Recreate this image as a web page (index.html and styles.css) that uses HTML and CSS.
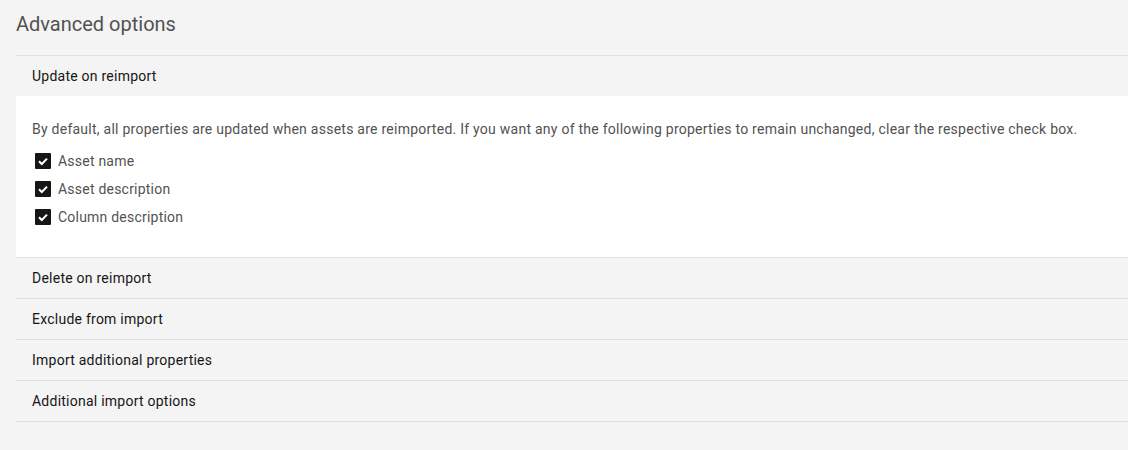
FILE: index.html
```html
<!DOCTYPE html>
<html lang="en">
<head>
<meta charset="utf-8">
<title>Advanced options</title>
<link rel="stylesheet" href="styles.css">
</head>
<body>
<main class="page">
  <h2 class="title">Advanced options</h2>
  <ul class="accordion">
    <li class="item open">
      <div class="heading">Update on reimport</div>
      <div class="content">
        <p class="desc">By default, all properties are updated when assets are reimported. If you want any of the following properties to remain unchanged, clear the respective check box.</p>
        <div class="checks">
          <label class="check"><span class="box"><svg viewBox="0 0 16 16" width="16" height="16"><path d="M4 8.2 L6.8 11 L12 5.6" fill="none" stroke="#fff" stroke-width="2"/></svg></span><span class="label">Asset name</span></label>
          <label class="check"><span class="box"><svg viewBox="0 0 16 16" width="16" height="16"><path d="M4 8.2 L6.8 11 L12 5.6" fill="none" stroke="#fff" stroke-width="2"/></svg></span><span class="label">Asset description</span></label>
          <label class="check"><span class="box"><svg viewBox="0 0 16 16" width="16" height="16"><path d="M4 8.2 L6.8 11 L12 5.6" fill="none" stroke="#fff" stroke-width="2"/></svg></span><span class="label">Column description</span></label>
        </div>
      </div>
    </li>
    <li class="item"><div class="heading">Delete on reimport</div></li>
    <li class="item"><div class="heading">Exclude from import</div></li>
    <li class="item"><div class="heading">Import additional properties</div></li>
    <li class="item"><div class="heading">Additional import options</div></li>
  </ul>
</main>
</body>
</html>
```

FILE: styles.css
```css
html, body {
  margin: 0;
  padding: 0;
  background: #f4f4f4;
}
body {
  font-family: Roboto, "Noto Sans", sans-serif;
  color: #161616;
}
.page {
  padding-left: 16px;
}
.title {
  margin: 0;
  padding-top: 10px;
  height: 55px;
  box-sizing: border-box;
  font-size: 20px;
  line-height: 28px;
  font-weight: 400;
  color: #525252;
}
.accordion {
  list-style: none;
  margin: 0;
  padding: 0;
  border-bottom: 1px solid #e0e0e0;
}
.item {
  border-top: 1px solid #e0e0e0;
}
.heading {
  height: 40px;
  display: flex;
  align-items: center;
  padding-left: 16px;
  font-size: 14px;
  letter-spacing: 0.24px;
  color: #161616;
}
.content {
  background: #ffffff;
  padding: 23px 16px 26px 16px;
}
.desc {
  margin: 0 0 8px 0;
  font-size: 14px;
  line-height: 20px;
  letter-spacing: 0.25px;
  color: #525252;
  white-space: nowrap;
}
.checks {
  display: flex;
  flex-direction: column;
}
.check {
  height: 28px;
  display: flex;
  align-items: center;
}
.box {
  width: 16px;
  height: 16px;
  margin-left: 3px;
  margin-right: 7px;
  background: #161616;
  border-radius: 1px;
  display: flex;
}
.label {
  font-size: 14px;
  letter-spacing: 0.22px;
  color: #525252;
}
```
